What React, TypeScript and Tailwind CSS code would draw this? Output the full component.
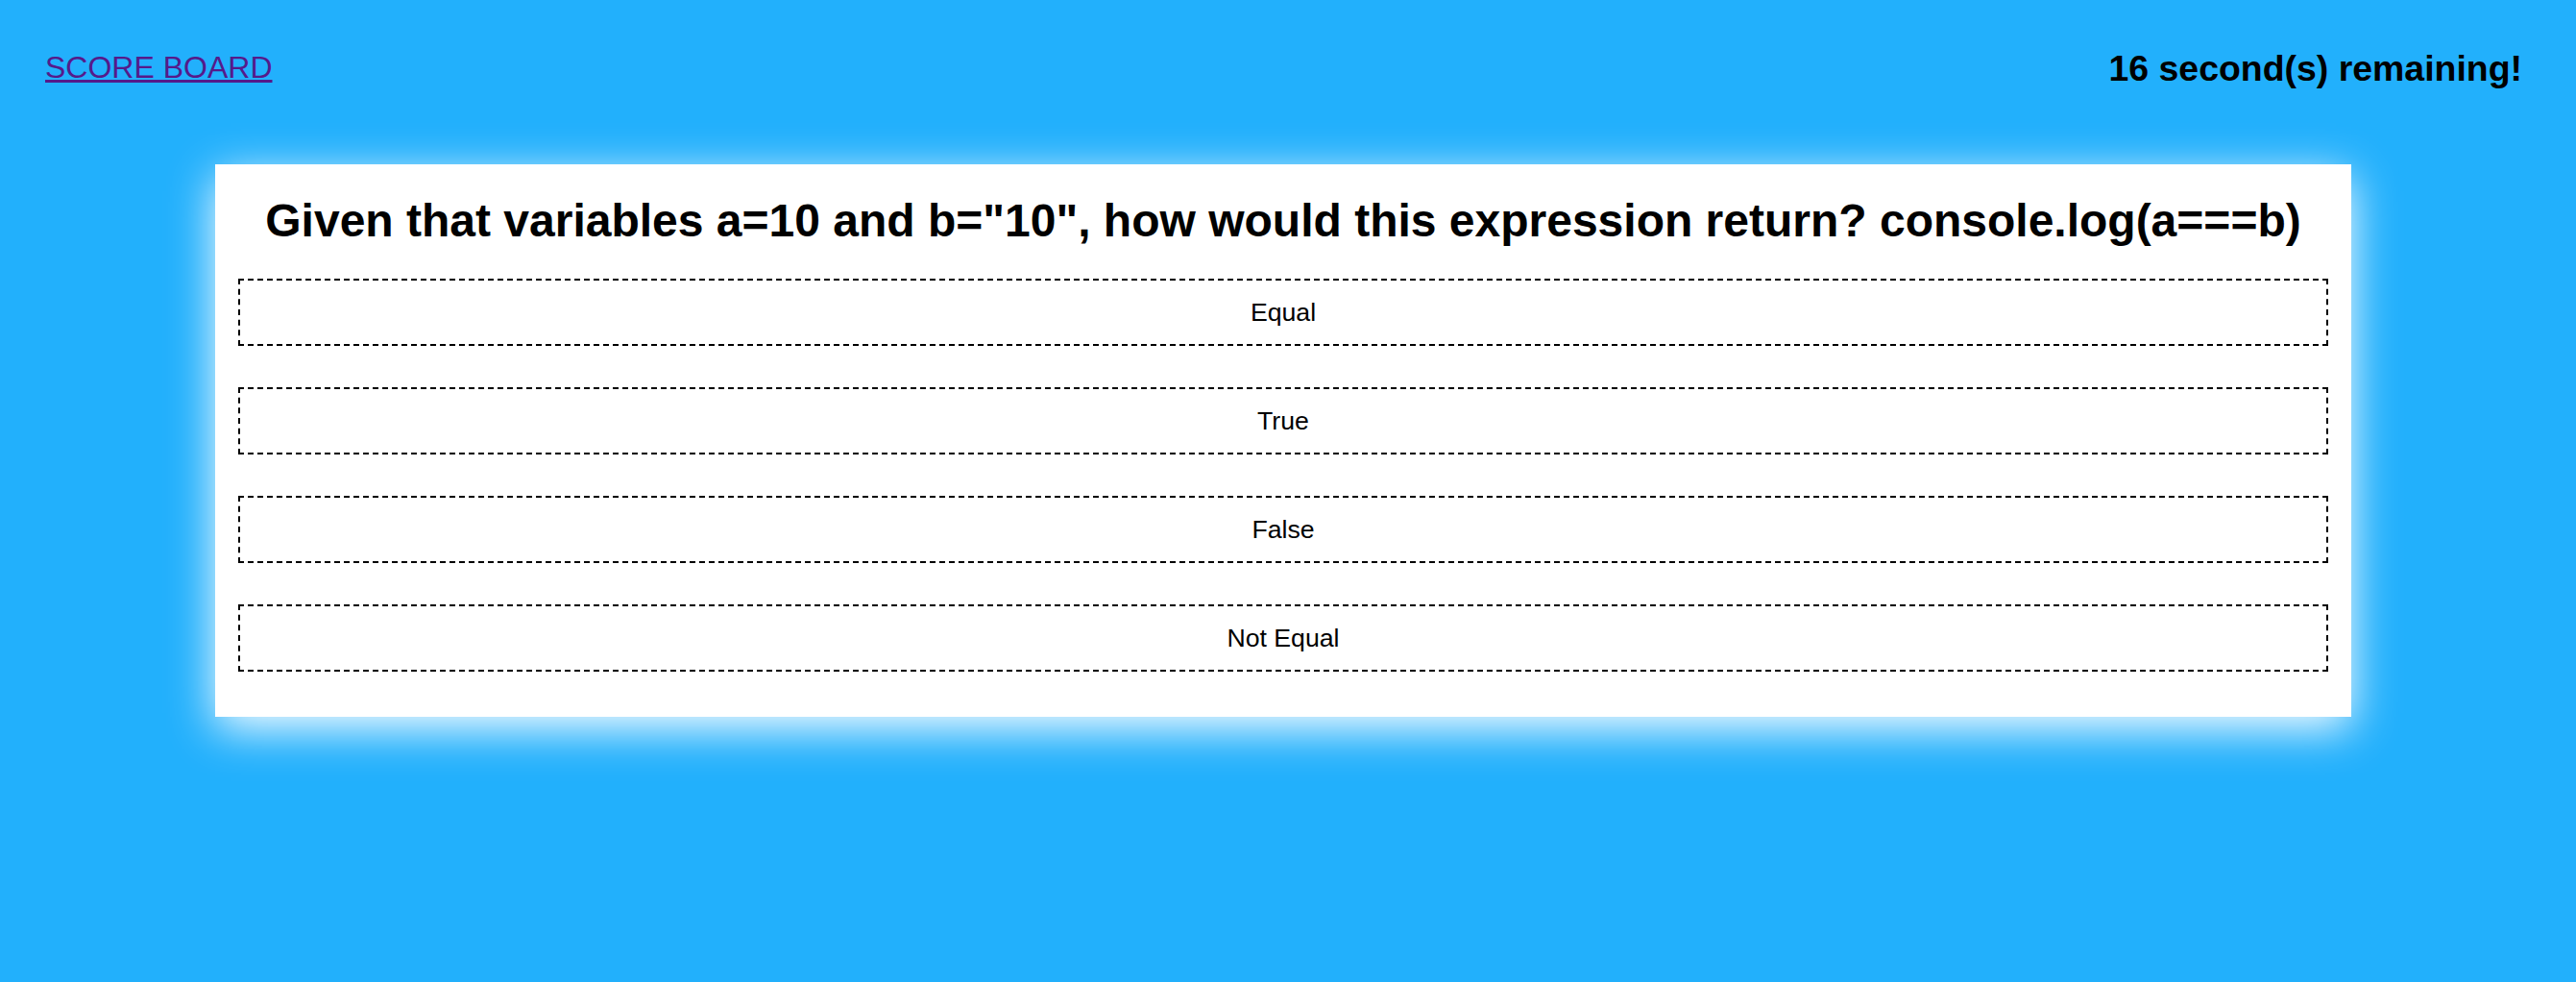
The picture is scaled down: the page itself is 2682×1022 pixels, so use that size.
const question =
  'Given that variables a=10 and b="10", how would this expression return? console.log(a===b)';
const choices = ["Equal", "True", "False", "Not Equal"];

export default function App() {
  return (
    <div className="min-h-[1022px] w-full bg-[#22b0fc] font-['Liberation_Sans',Arial,sans-serif] text-black">
      {/* Header */}
      <header className="flex items-start justify-between pl-[47px] pr-[56px] pt-[51px]">
        <a href="#" className="text-[32px] leading-[38px] text-[#551a8b] underline">
          SCORE BOARD
        </a>
        <h3 className="text-[37.44px] font-bold leading-[40px]">16 second(s) remaining!</h3>
      </header>

      {/* Question card */}
      <div className="ml-[224px] mt-[80px] w-[2224px] bg-white px-[24px] pb-[47px] pt-[24px] shadow-[0_12px_45px_0_rgba(255,255,255,1)]">
        <h2 className="text-center text-[48px] font-bold leading-[70px]">{question}</h2>
        <div className="mt-[25px] flex flex-col gap-[43px]">
          {choices.map((c) => (
            <button
              key={c}
              className="h-[70px] w-full border-2 border-dashed border-black bg-white text-[26.67px]"
            >
              {c}
            </button>
          ))}
        </div>
      </div>
    </div>
  );
}
